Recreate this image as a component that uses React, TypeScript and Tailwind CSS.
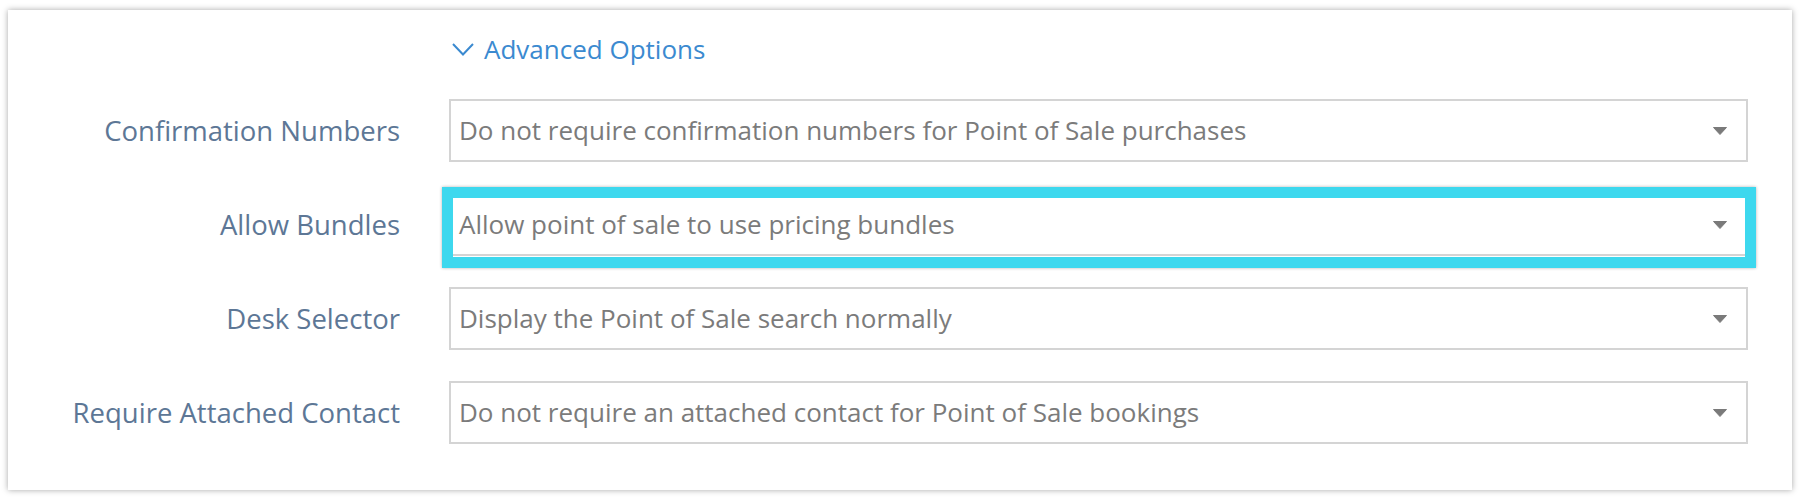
const rows = [
  {
    label: "Confirmation Numbers",
    value: "Do not require confirmation numbers for Point of Sale purchases"
  },
  {
    label: "Allow Bundles",
    value: "Allow point of sale to use pricing bundles",
    highlighted: true
  },
  { label: "Desk Selector", value: "Display the Point of Sale search normally" },
  {
    label: "Require Attached Contact",
    value: "Do not require an attached contact for Point of Sale bookings"
  }
];

const Caret = () => (
  <svg width="14" height="8" viewBox="0 0 14 8" className="shrink-0">
    <path d="M0.5 0.5 H13.5 L7 7.5 Z" fill="#7a7a7a" stroke="#7a7a7a" strokeLinejoin="round" />
  </svg>
);

const Select = ({ value, highlighted = false }: { value: string; highlighted?: boolean }) => (
  <div className="relative h-[63px]">
    <div className="flex h-full items-center justify-between border-2 border-[#d4d4d4] bg-white pl-[8px] pr-[19px]">
      <span className="text-[26px] text-[#7b7b7b]">{value}</span>
      <Caret />
    </div>
    {highlighted && (
      <div className="pointer-events-none absolute -top-[6px] -bottom-[12px] -left-[7px] -right-[8px] border-[11px] border-[#3dd8ee] shadow-[0_0_3px_rgba(0,0,0,0.3)]" />
    )}
  </div>
);

export default function App() {
  return (
    <div className="min-h-[500px] bg-white pt-[10px] pl-[8px] font-['Open_Sans',sans-serif]">
      <div className="w-[1784px] h-[480px] bg-white pt-[24px] shadow-[0_0_6px_rgba(0,0,0,0.35)]">
        <div className="grid grid-cols-[392px_1299px] gap-x-[49px] gap-y-[31px]">
          <div />
          <button className="mb-[4px] flex h-[30px] items-center gap-[10px] pl-[3px] text-[26px] text-[#3b8ad0]">
            <svg width="22" height="13" viewBox="0 0 22 13" fill="none">
              <polyline points="1,1 11,11.5 21,1" stroke="#3b8ad0" strokeWidth="2" />
            </svg>
            <span>Advanced Options</span>
          </button>
          {rows.map((row) => (
            <div key={row.label} className="contents">
              <div className="flex items-center justify-end text-[27.5px] text-[#5d7796]">
                {row.label}
              </div>
              <Select value={row.value} highlighted={row.highlighted} />
            </div>
          ))}
        </div>
      </div>
    </div>
  );
}
